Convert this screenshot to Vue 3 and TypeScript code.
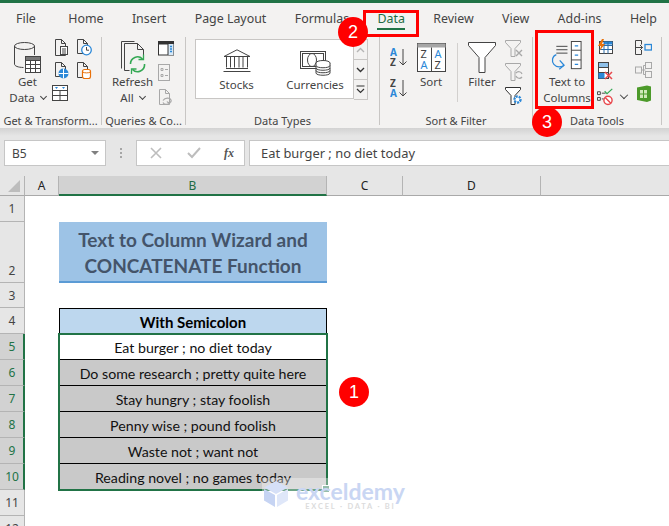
<script setup lang="ts">
interface SheetRow { n: number; kind: string; text: string }
const tabs: string[] = ['File', 'Home', 'Insert', 'Page Layout', 'Formulas', 'Data', 'Review', 'View', 'Add-ins', 'Help']
const rows: SheetRow[] = [
  { n: 1, kind: 'blank', text: '' },
  { n: 2, kind: 'title', text: '' },
  { n: 3, kind: 'blank', text: '' },
  { n: 4, kind: 'head', text: 'With Semicolon' },
  { n: 5, kind: 'first', text: 'Eat burger ; no diet today' },
  { n: 6, kind: 'grey', text: 'Do some research ; pretty quite here' },
  { n: 7, kind: 'grey', text: 'Stay hungry ; stay foolish' },
  { n: 8, kind: 'grey', text: 'Penny wise ; pound foolish' },
  { n: 9, kind: 'grey', text: 'Waste not ; want not' },
  { n: 10, kind: 'grey', text: 'Reading novel ; no games today' },
  { n: 11, kind: 'blank', text: '' },
  { n: 12, kind: 'blank', text: '' },
]
const isSel = (n: number): boolean => n >= 5 && n <= 10
</script>

<template>
  <div class="page">
    <div class="topbar"></div>
    <nav class="tabs">
      <span v-for="t in tabs" :key="t" class="tab" :class="{ on: t === 'Data' }">{{ t }}</span>
    </nav>

    <section class="ribbon">
      <!-- Get & Transform -->
      <div class="group g1">
        <div class="body">
          <div class="big b-get">
            <svg class="bigicon" width="30" height="34" viewBox="0 0 30 34" fill="none" stroke="#444">
              <ellipse cx="11.5" cy="6" rx="10" ry="3.5"/>
              <path d="M1.5 6v18c0 2 3.5 3.4 9 3.5M21.5 6v9"/>
              <rect x="12.5" y="16.5" width="15" height="16" fill="#fff"/>
              <rect x="12.5" y="16.5" width="15" height="4" fill="#777"/>
              <path d="M12.5 24.5h15M12.5 28.5h15M17.5 20.5v12M22.5 20.5v12"/>
            </svg>
            <span>Get</span>
            <span>Data <i class="chev"></i></span>
          </div>
          <div class="smallgrid two">
            <svg width="15" height="17" viewBox="0 0 15 17" fill="none" stroke="#444"><path d="M1.5.5h6l4 4v12h-10zM7.5.5v4h4"/><rect x="6.5" y="7.5" width="7" height="8" fill="#fff"/><path d="M8 10h4M8 12h4M8 14h4"/></svg>
            <svg width="16" height="17" viewBox="0 0 16 17" fill="none" stroke="#444"><path d="M1.5.5h6l4 4v10h-10zM7.5.5v4h4"/><circle cx="10.5" cy="11" r="4.8" fill="#fff" stroke="#2b88d8" stroke-width="1.3"/><path d="M10.5 8v3.2h2.5" stroke="#444"/></svg>
            <svg width="15" height="17" viewBox="0 0 15 17" fill="none" stroke="#444"><path d="M1.5.5h6l4 4v10h-10zM7.5.5v4h4"/><circle cx="9.5" cy="11.5" r="5" fill="#2b88d8" stroke="none"/><path d="M4.5 11.5h10M9.5 6.5v10" stroke="#fff"/></svg>
            <svg width="16" height="17" viewBox="0 0 16 17" fill="none" stroke="#444"><path d="M1.5.5h6l4 4v11h-10zM7.5.5v4h4"/><rect x="6.5" y="7.5" width="8" height="9" rx="2" fill="#fff" stroke="#e8710a" stroke-width="1.2"/><path d="M6.5 10c2 1.2 6 1.2 8 0" stroke="#e8710a"/></svg>
            <svg class="wide" width="16" height="16" viewBox="0 0 16 16" fill="none" stroke="#444"><rect x=".5" y=".5" width="15" height="15" fill="#fff"/><path d="M.5 5.5h15M.5 10.5h15M8 5.5v10"/><path d="M3 2h3l-1.5 2zM10 2h3l-1.5 2z" fill="#2b88d8" stroke="none"/></svg>
          </div>
        </div>
        <div class="glabel">Get &amp; Transform...</div>
      </div>
      <div class="sep"></div>

      <!-- Queries -->
      <div class="group g2">
        <div class="body">
          <div class="big b-refresh">
            <svg class="bigicon" width="30" height="34" viewBox="0 0 30 34" fill="none" stroke="#444">
              <path d="M3.5 28.5V1.5h13"/>
              <path d="M6.5 30.5V3.5h13l6 6v10M19.500 3.500v6h6M6.500 30.500h5"/>
              <path d="M12.500 24a7 7 0 0 1 12-5M26.500 24a7 7 0 0 1-12 5.500" stroke="#33a853" stroke-width="1.6"/>
              <path d="M25.500 14.500v5h-5M13.500 34v-5h5" stroke="#33a853" stroke-width="1.3"/>
            </svg>
            <span>Refresh</span>
            <span>All <i class="chev"></i></span>
          </div>
          <div class="smallcol qcol">
            <svg width="16" height="15" viewBox="0 0 16 15" fill="none" stroke="#333"><rect x=".5" y=".5" width="15" height="13.500" fill="#fff"/><rect x=".5" y=".5" width="15" height="2.500" fill="#333"/><rect x="10" y="3" width="5.500" height="11" fill="#d7e9f7" stroke="none"/><path d="M10 3v11"/><path d="M12 5.500h2M12 8h2M12 10.500h2" stroke="#2b88d8" stroke-width="1.300"/></svg>
            <svg width="12" height="17" viewBox="0 0 12 17" fill="none" stroke="#a8a8a8"><rect x=".5" y=".5" width="11" height="16"/><path d="M3 4.500h2v2H3zM3 10.500h2v2H3zM7 5.500h3M7 11.500h3"/></svg>
            <svg width="15" height="17" viewBox="0 0 15 17" fill="none" stroke="#a8a8a8"><path d="M1.500.5h6l4 4v11h-10zM7.500.5v4h4"/><path d="M5 11.500c2-3 7-3 8-.5s-3 3.500-4 1.500M12 14c-2 2-6 2-7-.5" stroke-width="1.200"/></svg>
          </div>
        </div>
        <div class="glabel">Queries &amp; Co...</div>
      </div>
      <div class="sep"></div>

      <!-- Data types -->
      <div class="group g3">
        <div class="body">
          <div class="gallery">
            <div class="gitem stocks">
              <svg width="28" height="24" viewBox="0 0 28 24" fill="none" stroke="#444"><path d="M14 .8 27 7.500H1z"/><path d="M3.500 7.500v11M7.500 7.500v11M11.500 7.500v11M16 7.500v11M20 7.500v11M24.500 7.500v11M3 19.500h22M.5 22.500h27"/></svg>
              <span>Stocks</span>
            </div>
            <div class="gitem cur">
              <svg width="31" height="26" viewBox="0 0 31 26" fill="none" stroke="#444"><rect x=".5" y=".5" width="25" height="17"/><rect x="2.500" y="2.500" width="21" height="13"/><ellipse cx="12" cy="9" rx="4.500" ry="6.500"/><g fill="#f3f2f1"><ellipse cx="23" cy="12" rx="7" ry="2.500" fill="#fff"/><path d="M16 12v10c0 3 14 3 14 0V12" fill="#fff"/><path d="M16 17c0 3 14 3 14 0M16 14.500c0 3 14 3 14 0M16 19.500c0 3 14 3 14 0" fill="none"/></g></svg>
              <span>Currencies</span>
            </div>
          </div>
          <div class="scroll">
            <div class="sbtn">
              <svg width="9" height="6" viewBox="0 0 9 6" fill="none" stroke="#b5b5b5" stroke-width="1.400"><path d="M1 5 4.500 1.500 8 5"/></svg>
            </div>
            <div class="sbtn">
              <svg width="9" height="6" viewBox="0 0 9 6" fill="none" stroke="#333" stroke-width="1.400"><path d="M1 1l3.500 3.500L8 1"/></svg>
            </div>
            <div class="sbtn">
              <svg width="9" height="9" viewBox="0 0 9 9" fill="none" stroke="#333" stroke-width="1.200"><path d="M.5 1h8M1 4l3.500 3.500L8 4"/></svg>
            </div>
          </div>
        </div>
        <div class="glabel">Data Types</div>
      </div>
      <div class="sep"></div>

      <!-- Sort & filter -->
      <div class="group g4">
        <div class="body">
          <div class="azcol">
            <svg width="18" height="20" viewBox="0 0 18 20" fill="none"><text x="0" y="9" class="az blue">A</text><text x="0" y="19" class="az dark">Z</text><path d="M13 2v16M9.500 14.500 13 18l3.500-3.500" stroke="#444"/></svg>
            <svg width="18" height="20" viewBox="0 0 18 20" fill="none"><text x="0" y="9" class="az dark">Z</text><text x="0" y="19" class="az blue">A</text><path d="M13 2v16M9.500 14.500 13 18l3.500-3.500" stroke="#444"/></svg>
          </div>
          <div class="big b-sort">
            <svg class="bigicon" width="29" height="29" viewBox="0 0 29 29" fill="none" stroke="#444"><rect x=".5" y=".5" width="28" height="28" fill="#fff"/><rect x=".5" y=".5" width="28" height="4" fill="#a6a6a6" stroke="none"/><path d="M14.500 4.500v24"/><text x="3.500" y="15" class="az2 dark" stroke="none">Z</text><text x="3.500" y="26" class="az2 blue" stroke="none">A</text><text x="17.500" y="15" class="az2 blue" stroke="none">A</text><text x="17.500" y="26" class="az2 dark" stroke="none">Z</text></svg>
            <span>Sort</span>
          </div>
          <div class="innersep"></div>
          <div class="big b-filter">
            <svg class="bigicon" width="28" height="31" viewBox="0 0 28 31" fill="none" stroke="#444"><path d="M.5.5h27v3L17 15.500v15h-6v-15L.5 3.500z" fill="#fff"/></svg>
            <span>Filter</span>
          </div>
          <div class="smallcol fcol">
            <svg width="18" height="17" viewBox="0 0 18 17" fill="none" stroke="#a8a8a8"><path d="M.5.5h15v2l-5.500 6v8h-4v-8L.5 2.500z"/><path d="M11 10l6 6M17 10l-6 6" stroke-width="1.400"/></svg>
            <svg width="18" height="18" viewBox="0 0 18 18" fill="none" stroke="#a8a8a8"><path d="M.5.5h15v2l-5.500 6v9h-4v-9L.5 2.500z"/><path d="M11 10a3.500 3.500 0 0 1 6 1M17 14a3.500 3.500 0 0 1-6-1" stroke-width="1.200"/></svg>
            <svg width="18" height="18" viewBox="0 0 18 18" fill="none" stroke="#333"><path d="M.5.5h15v2l-5.500 6v9h-4v-9L.5 2.500z" fill="#fff"/><circle cx="12.500" cy="12.500" r="3" stroke="#2b88d8" stroke-width="2.400" stroke-dasharray="2 1" fill="#fff"/></svg>
          </div>
        </div>
        <div class="glabel">Sort &amp; Filter</div>
      </div>
      <div class="sep"></div>

      <!-- Data tools -->
      <div class="group g5">
        <div class="body">
          <div class="big b-ttc">
            <svg class="bigicon" width="34" height="34" viewBox="0 0 34 34" fill="none" stroke="#444">
              <path d="M6 5.500h11.500M6 9h11.500M6 12.500h11.500"/>
              <rect x="21.500" y=".5" width="10" height="28" fill="#fff"/>
              <path d="M21.500 9.500h10M21.500 19.500h10"/>
              <path d="M25 5h3.500M25 14.500h3.500M25 24h3.500" stroke="#2b88d8" stroke-width="1.300"/>
              <path d="M6 14C1.500 15.500 1 21 3.500 24c2.500 3 6.500 3 10 1.500" stroke="#2b88d8" stroke-width="1.300"/>
              <path d="M9.500 20l4.500 5-5 4" stroke="#2b88d8" stroke-width="1.300"/>
            </svg>
            <span>Text to</span>
            <span>Columns</span>
          </div>
          <div class="smallcol tcol">
            <svg width="16" height="15" viewBox="0 0 16 15" fill="none" stroke="#444"><rect x="2.500" y="2.500" width="13" height="12" fill="#fff"/><rect x="7" y="2.500" width="8.500" height="3" fill="#2b88d8" stroke="none"/><path d="M2.500 6.500h13M2.500 10.500h13M7 2.500v12M11 2.500v12" stroke="#2b6ca8"/><path d="M5 0 1 7h3L2.500 12 8 5H5l2-5z" fill="#e8710a" stroke="none"/></svg>
            <svg width="16" height="18" viewBox="0 0 16 18" fill="none" stroke="#444"><rect x="1.500" y=".5" width="10" height="16" fill="#fff"/><rect x="1.500" y=".5" width="10" height="5" fill="#8fc1ea"/><rect x="1.500" y="10.500" width="6" height="6" fill="#2b88d8" stroke="none"/><path d="M1.500 5.500h10M1.500 10.500h10"/><path d="M8 10l7 7M15 10l-7 7" stroke="#e8474c" stroke-width="1.500"/></svg>
            <div class="dv">
              <svg width="17" height="18" viewBox="0 0 17 18" fill="none" stroke="#444"><path d="M.5 3.500h3v3h-3zM.5 9.500h3v3h-3zM5 5h4M5 11h2"/><path d="M8 3l2.500 2.500L16 .5" stroke="#33a853" stroke-width="1.300"/><circle cx="11.500" cy="12.500" r="4.300" stroke="#e8474c" stroke-width="1.500" fill="#fff"/><path d="M8.500 9.500l6 6" stroke="#e8474c" stroke-width="1.500"/></svg>
              <i class="chev dark"></i>
            </div>
          </div>
          <div class="smallcol lcol">
            <svg width="17" height="15" viewBox="0 0 17 15" fill="none" stroke="#444"><path d="M.5.5h6v4M6.500 10v4.500h-6V.5"/><path d="M1 7.500h6.500M5 5l2.500 2.500L5 10"/><rect x="10" y="4.500" width="6.500" height="5.500" stroke="#2b88d8" stroke-width="1.300"/></svg>
            <svg width="17" height="16" viewBox="0 0 17 16" fill="none" stroke="#a8a8a8"><rect x=".5" y="5" width="6" height="6"/><rect x="10.500" y=".5" width="6" height="6"/><rect x="10.500" y="9.500" width="6" height="6"/><path d="M6.500 8h4M10.500 3.500H8.500v9h2"/></svg>
            <svg width="17" height="17" viewBox="0 0 17 17" fill="none"><path d="M2 2.500 12 .5l4 1v14l-4 1.500-10-2z" fill="#4c9a2a"/><path d="M5 5h7v8H5z" fill="#cfe8b8"/><path d="M8.500 5v8M5 9h7" stroke="#4c9a2a"/></svg>
          </div>
        </div>
        <div class="glabel">Data Tools</div>
      </div>
      <div class="sep"></div>
    </section>
    <div class="shadow"></div>

    <section class="fbar">
      <div class="namebox"><span>B5</span><i class="tri"></i></div>
      <div class="dots"><i></i><i></i><i></i></div>
      <div class="fxbox">
        <svg width="12" height="12" viewBox="0 0 12 12" stroke="#bdbdbd" stroke-width="1.600" fill="none"><path d="M1 1l10 10M11 1 1 11"/></svg>
        <svg width="14" height="12" viewBox="0 0 14 12" stroke="#bdbdbd" stroke-width="2" fill="none"><path d="M1 6l4 4 8-9"/></svg>
        <em>fx</em>
      </div>
      <div class="finput">Eat burger ; no diet today</div>
    </section>

    <section class="sheet">
      <div class="corner"><i></i></div>
      <div class="chead">A</div>
      <div class="chead sel">B</div>
      <div class="chead">C</div>
      <div class="chead">D</div>
      <div class="chead last"></div>

      <template v-for="r in rows" :key="r.n">
        <div class="rhead" :class="[`r${r.n}`, { sel: isSel(r.n) }]">{{ r.n }}</div>
        <div class="cell"></div>
        <div v-if="r.kind === 'title'" class="cell title">Text to Column Wizard and<br />CONCATENATE Function</div>
        <div v-else class="cell" :class="r.kind">{{ r.text }}</div>
        <div class="cell"></div>
        <div class="cell"></div>
        <div class="cell"></div>
      </template>

      <div class="selection"><i></i></div>
      <div class="mark">
        <svg width="28" height="28" viewBox="0 0 28 28"><path d="M14 1 26 7.500 14 14 2 7.500z" fill="#d6e0f7"/><path d="M2 9l11 6v12L2 20.500z" fill="#c6d4f3"/><path d="M26 9 15 15v12l11-6.500z" fill="#dfe7f9"/></svg>
        <div class="marktext"><b>exceldemy</b><small>EXCEL · DATA · BI</small></div>
      </div>
    </section>

    <div class="box box-data"></div>
    <div class="box box-ttc"></div>
    <div class="badge b1">1</div>
    <div class="badge b2">2</div>
    <div class="badge b3">3</div>
  </div>
</template>

<style scoped>
.page { position: relative; width: 669px; height: 526px; overflow: hidden; background: #fff; font-family: "Noto Sans", "Open Sans", sans-serif; color: #444; font-size: 12px; }
.topbar { height: 3px; background: #217346; }
.tabs { height: 27px; background: #f3f2f1; display: flex; align-items: center; gap: 28.4px; padding-left: 16px; font-size: 12.4px; }
.tab { position: relative; line-height: 27px; padding-top: 2px; height: 27px; box-sizing: border-box; white-space: nowrap; }
.tab:nth-child(2) { margin-left: 4px; }
.tab.on { color: #1f6b43; }
.tab.on::after { content: ""; position: absolute; left: 0; right: 0; bottom: 0; height: 2px; background: #217346; }

.ribbon { height: 98px; background: #f3f2f1; display: flex; }
.group { display: flex; flex-direction: column; flex: none; height: 98px; }
.g1 { width: 101px; } .g2 { width: 83px; } .g3 { width: 193px; } .g4 { width: 152px; } .g5 { width: 128px; }
.body { flex: 1; display: flex; min-height: 0; }
.glabel { height: 16px; line-height: 17px; text-align: center; font-size: 11px; white-space: nowrap; overflow: hidden; }
.sep { flex: none; width: 1px; margin: 7px 0 3px; background: #c8c6c4; }

.big { display: flex; flex-direction: column; align-items: center; flex: none; padding-top: 10px; line-height: 16px; font-size: 11.5px; white-space: nowrap; }
.bigicon { display: block; height: 34px; }
.b-get { width: 53px; margin-left: 1px; }
.b-refresh { width: 45px; margin-left: 8px; }
.b-sort { width: 36px; margin-left: 5px; padding-top: 11px; }
.b-sort .bigicon { height: 33px; }
.b-filter { width: 38px; margin-left: 5px; padding-top: 11px; }
.b-filter .bigicon { height: 33px; }
.b-ttc { width: 56px; margin-left: 6px; padding-top: 11px; }
.b-ttc .bigicon { height: 33px; }

.chev { display: inline-block; width: 4px; height: 4px; border-right: 1px solid #444; border-bottom: 1px solid #444; transform: rotate(45deg); margin: 0 0 3px 3px; }
.chev.dark { margin: 0 0 5px 8px; width: 5px; height: 5px; }

.smallgrid.two { display: grid; grid-template-columns: 22px 22px; grid-auto-rows: 23px; padding-top: 9px; justify-items: start; }
.smallgrid .wide { grid-column: 1 / 3; margin-left: -2px; }
.smallcol { display: flex; flex-direction: column; flex: none; }
.smallcol > * { flex: none; }
.qcol { margin-left: 3px; padding-top: 11px; gap: 8px; }
.fcol { margin-left: 4px; padding-top: 10px; gap: 6px; }
.tcol { margin-left: 2px; width: 30px; padding-top: 9px; gap: 8px; }
.lcol { margin-left: 8px; padding-top: 10px; gap: 7px; }
.dv { display: flex; align-items: center; }

.gallery { margin: 9px 0 0 9px; width: 159px; height: 60px; background: #fff; border: 1px solid #c8c6c4; box-sizing: border-box; display: flex; }
.gitem { display: flex; flex-direction: column; align-items: center; flex: none; padding-top: 9px; font-size: 11.5px; white-space: nowrap; }
.stocks { width: 81px; }
.cur { width: 76px; padding-top: 11px; }
.stocks svg { margin-bottom: 4px; }
.cur svg { margin-bottom: 0; }
.scroll { margin-top: 9px; width: 14px; height: 60px; display: flex; flex-direction: column; }
.sbtn { flex: 1; display: flex; align-items: center; justify-content: center; border: 1px solid #c8c6c4; border-left: none; margin-bottom: -1px; background: #f3f2f1; }
.azcol { margin-left: 10px; width: 18px; padding-top: 17px; display: flex; flex-direction: column; gap: 11px; flex: none; }
.innersep { flex: none; width: 1px; margin: 13px 0 10px 8px; background: #d2d0ce; }
.az { font: bold 10px "Noto Sans", sans-serif; }
.az2 { font: 11px "Noto Sans", sans-serif; }
.blue { fill: #2b88d8; }
.dark { fill: #444; }

.shadow { height: 8px; background: linear-gradient(#d2d2d2, #e6e6e6); }
.fbar { height: 40px; background: #e6e6e6; display: flex; align-items: flex-start; padding: 4px 0 0 4px; box-sizing: border-box; }
.namebox { width: 102px; height: 26px; box-sizing: border-box; background: #fff; border: 1px solid #c6c6c6; display: flex; align-items: center; justify-content: space-between; padding: 0 6px 0 7px; font-size: 12px; color: #444; }
.tri { width: 0; height: 0; border-left: 4px solid transparent; border-right: 4px solid transparent; border-top: 4px solid #808080; }
.dots { width: 30px; height: 26px; display: flex; flex-direction: column; align-items: center; justify-content: center; gap: 2px; }
.dots i { width: 2px; height: 2px; background: #a6a6a6; }
.fxbox { width: 109px; height: 26px; box-sizing: border-box; background: #fff; border: 1px solid #c6c6c6; display: flex; align-items: center; padding-left: 13px; margin-right: 4px; }
.fxbox svg:nth-child(2) { margin-left: 25px; }
.fxbox em { margin-left: 23px; font: italic bold 12px "Liberation Serif", serif; color: #555; }
.finput { flex: 1; height: 26px; box-sizing: border-box; background: #fff; border: 1px solid #c6c6c6; border-right: none; padding-left: 11px; line-height: 24px; font-size: 12.9px; color: #444; white-space: nowrap; }

.sheet { position: relative; display: grid; grid-template-columns: 25px 34px 268px 76px 138px 128px; grid-template-rows: 20px 26px 61px 25px 26px repeat(7, 26px) 26px; background: #fff; }
.corner { background: #e6e6e6; border-right: 1px solid #b4b4b4; border-bottom: 1px solid #a9a9a9; box-sizing: border-box; position: relative; }
.corner i { position: absolute; left: 8px; bottom: 3px; width: 0; height: 0; border-left: 12px solid transparent; border-bottom: 12px solid #bdbdbd; }
.chead { background: #e6e6e6; border-right: 1px solid #b4b4b4; border-bottom: 1px solid #a9a9a9; box-sizing: border-box; text-align: center; line-height: 19px; font-size: 12px; color: #222; }
.chead.sel { background: #d2d2d2; border-bottom: 2px solid #217346; color: #1f6b43; }
.chead.last { border-right: none; }
.rhead { background: #e6e6e6; border-right: 1px solid #b4b4b4; border-bottom: 1px solid #b4b4b4; box-sizing: border-box; display: flex; align-items: center; justify-content: center; font-size: 12px; color: #444; }
.rhead.r2, .rhead.r3 { align-items: flex-end; padding-bottom: 3px; }
.rhead.sel { background: #d2d2d2; color: #217346; border-right: 2px solid #217346; padding-left: 1px; }
.cell { min-width: 0; box-sizing: border-box; font-family: "Lato", "Noto Sans", sans-serif; font-size: 14.2px; color: #111; text-align: center; white-space: nowrap; }
.title { background: #9dc3e6; border-bottom: 2px solid #5b9bd5; font-weight: 700; font-size: 19px; line-height: 26px; padding-top: 5px; color: #44546a; }
.head { background: #bdd7ee; border: 1px solid #000; font-weight: 700; font-size: 15px; color: #000; line-height: 26px; }
.first { background: #fff; border-bottom: 1px solid #000; line-height: 28px; }
.grey { background: #c9c9c9; border-bottom: 1px solid #000; line-height: 28px; }

.selection { position: absolute; left: 58px; top: 157px; width: 270px; height: 158px; box-sizing: border-box; border: 2px solid #217346; }
.selection i { position: absolute; right: -4px; bottom: -4px; width: 6px; height: 6px; background: #5c9c7e; border: 1px solid #fff; }
.mark { position: absolute; left: 262px; top: 302px; width: 143px; height: 32px; display: flex; gap: 6px; align-items: center; background: rgba(255, 255, 255, .35); }
.marktext { display: flex; flex-direction: column; align-items: center; line-height: 1; margin-top: 3px; }
.marktext b { font: 700 23px "Lato", sans-serif; color: #c9d6f3; line-height: 21px; }
.marktext small { font: 700 7.5px "Lato", sans-serif; letter-spacing: 1.8px; color: #dcdcdc; line-height: 9px; }

.box { position: absolute; box-sizing: border-box; border: 3px solid #f00; }
.box-data { left: 363px; top: 10px; width: 56px; height: 27px; }
.box-ttc { left: 535px; top: 30px; width: 59px; height: 79px; }
.badge { position: absolute; width: 30px; height: 30px; border-radius: 50%; background: #f00; color: #fff; display: flex; align-items: center; justify-content: center; font-family: "Liberation Sans", sans-serif; font-size: 18px; }
.b1 { left: 339px; top: 377px; }
.b2 { left: 338px; top: 17px; }
.b3 { left: 532px; top: 107px; }
</style>
